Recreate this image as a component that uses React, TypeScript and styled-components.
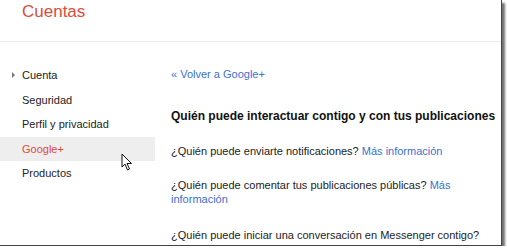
import React, { FC } from "react";
import styled, { createGlobalStyle } from "styled-components";

const GlobalStyle = createGlobalStyle`
  html, body {
    margin: 0;
    padding: 0;
    background: #ffffff;
  }
  body {
    font-family: "Liberation Sans", Arial, sans-serif;
    color: #222222;
  }
`;

const Frame = styled.div`
  position: relative;
  width: 502px;
  height: 246px;
  background: #ffffff;
  overflow: hidden;
  border-right: 1px solid #444444;
  border-bottom: 1px solid #444444;
  box-shadow: 3px 3px 2px rgba(0, 0, 0, 0.55);
  box-sizing: border-box;
`;

const Header = styled.div`
  height: 42px;
  border-bottom: 1px solid #ebebeb;
  padding-left: 22px;
  box-sizing: border-box;
`;

const Title = styled.h1`
  margin: 0;
  padding-top: 2px;
  font-size: 17px;
  font-weight: normal;
  color: #dd4b39;
  line-height: 20px;
`;

const Body = styled.div`
  display: flex;
  padding-top: 21px;
`;

const SideNav = styled.ul`
  list-style: none;
  margin: 0;
  padding: 0;
  width: 155px;
  flex-shrink: 0;
`;

const NavItem = styled.li<{ $active?: boolean }>`
  position: relative;
  height: 24.5px;
  line-height: 24px;
  padding-left: 22px;
  font-size: 11px;
  color: ${(p) => (p.$active ? "#dd4b39" : "#222222")};
  background: ${(p) => (p.$active ? "#eeeeee" : "transparent")};
`;

const Arrow = styled.span`
  position: absolute;
  left: 12px;
  top: 9px;
  width: 0;
  height: 0;
  border-top: 3px solid transparent;
  border-bottom: 3px solid transparent;
  border-left: 3px solid #777777;
`;

const Cursor = styled.svg`
  position: absolute;
  left: 121px;
  top: 16px;
`;

const Content = styled.div`
  flex: 1;
  padding-left: 16px;
`;

const BackLink = styled.a`
  display: block;
  font-size: 11px;
  line-height: 14px;
  color: #3d6fd1;
  text-decoration: none;
  margin-top: 4px;
`;

const Heading = styled.h2`
  margin: 28px 0 0 0;
  font-size: 12px;
  line-height: 14px;
  font-weight: bold;
  color: #111111;
  white-space: nowrap;
`;

const Question = styled.p<{ $gap: number }>`
  margin: ${(p) => p.$gap}px 0 0 0;
  font-size: 11px;
  line-height: 14px;
  color: #222222;
  padding-right: 2px;
`;

const More = styled.a`
  color: #3d6fd1;
  text-decoration: none;
`;

const questions = [
  { text: "¿Quién puede enviarte notificaciones?", more: true, gap: 21 },
  { text: "¿Quién puede comentar tus publicaciones públicas?", more: true, gap: 20 },
  { text: "¿Quién puede iniciar una conversación en Messenger contigo?", more: false, gap: 22 },
];

const navItems = ["Cuenta", "Seguridad", "Perfil y privacidad", "Google+", "Productos"];

const App: FC = () => {
  return (
    <>
      <GlobalStyle />
      <Frame>
        <Header>
          <Title>Cuentas</Title>
        </Header>
        <Body>
          <SideNav>
            {navItems.map((item) => (
              <NavItem key={item} $active={item === "Google+"}>
                {item === "Cuenta" && <Arrow />}
                {item}
                {item === "Google+" && (
                  <Cursor width="13" height="18" viewBox="0 0 13 18">
                    <path
                      d="M1 1 L1 14 L4 11 L6.5 17 L8.5 16 L6 10.5 L10.5 10.5 Z"
                      fill="#ffffff"
                      stroke="#111111"
                      strokeWidth="1"
                      strokeLinejoin="round"
                    />
                  </Cursor>
                )}
              </NavItem>
            ))}
          </SideNav>
          <Content>
            <BackLink href="#">« Volver a Google+</BackLink>
            <Heading>Quién puede interactuar contigo y con tus publicaciones</Heading>
            {questions.map((q) => (
              <Question key={q.text} $gap={q.gap}>
                {q.text}
                {q.more && (
                  <>
                    {" "}
                    <More href="#">Más información</More>
                  </>
                )}
              </Question>
            ))}
          </Content>
        </Body>
      </Frame>
    </>
  );
};

export default App;
